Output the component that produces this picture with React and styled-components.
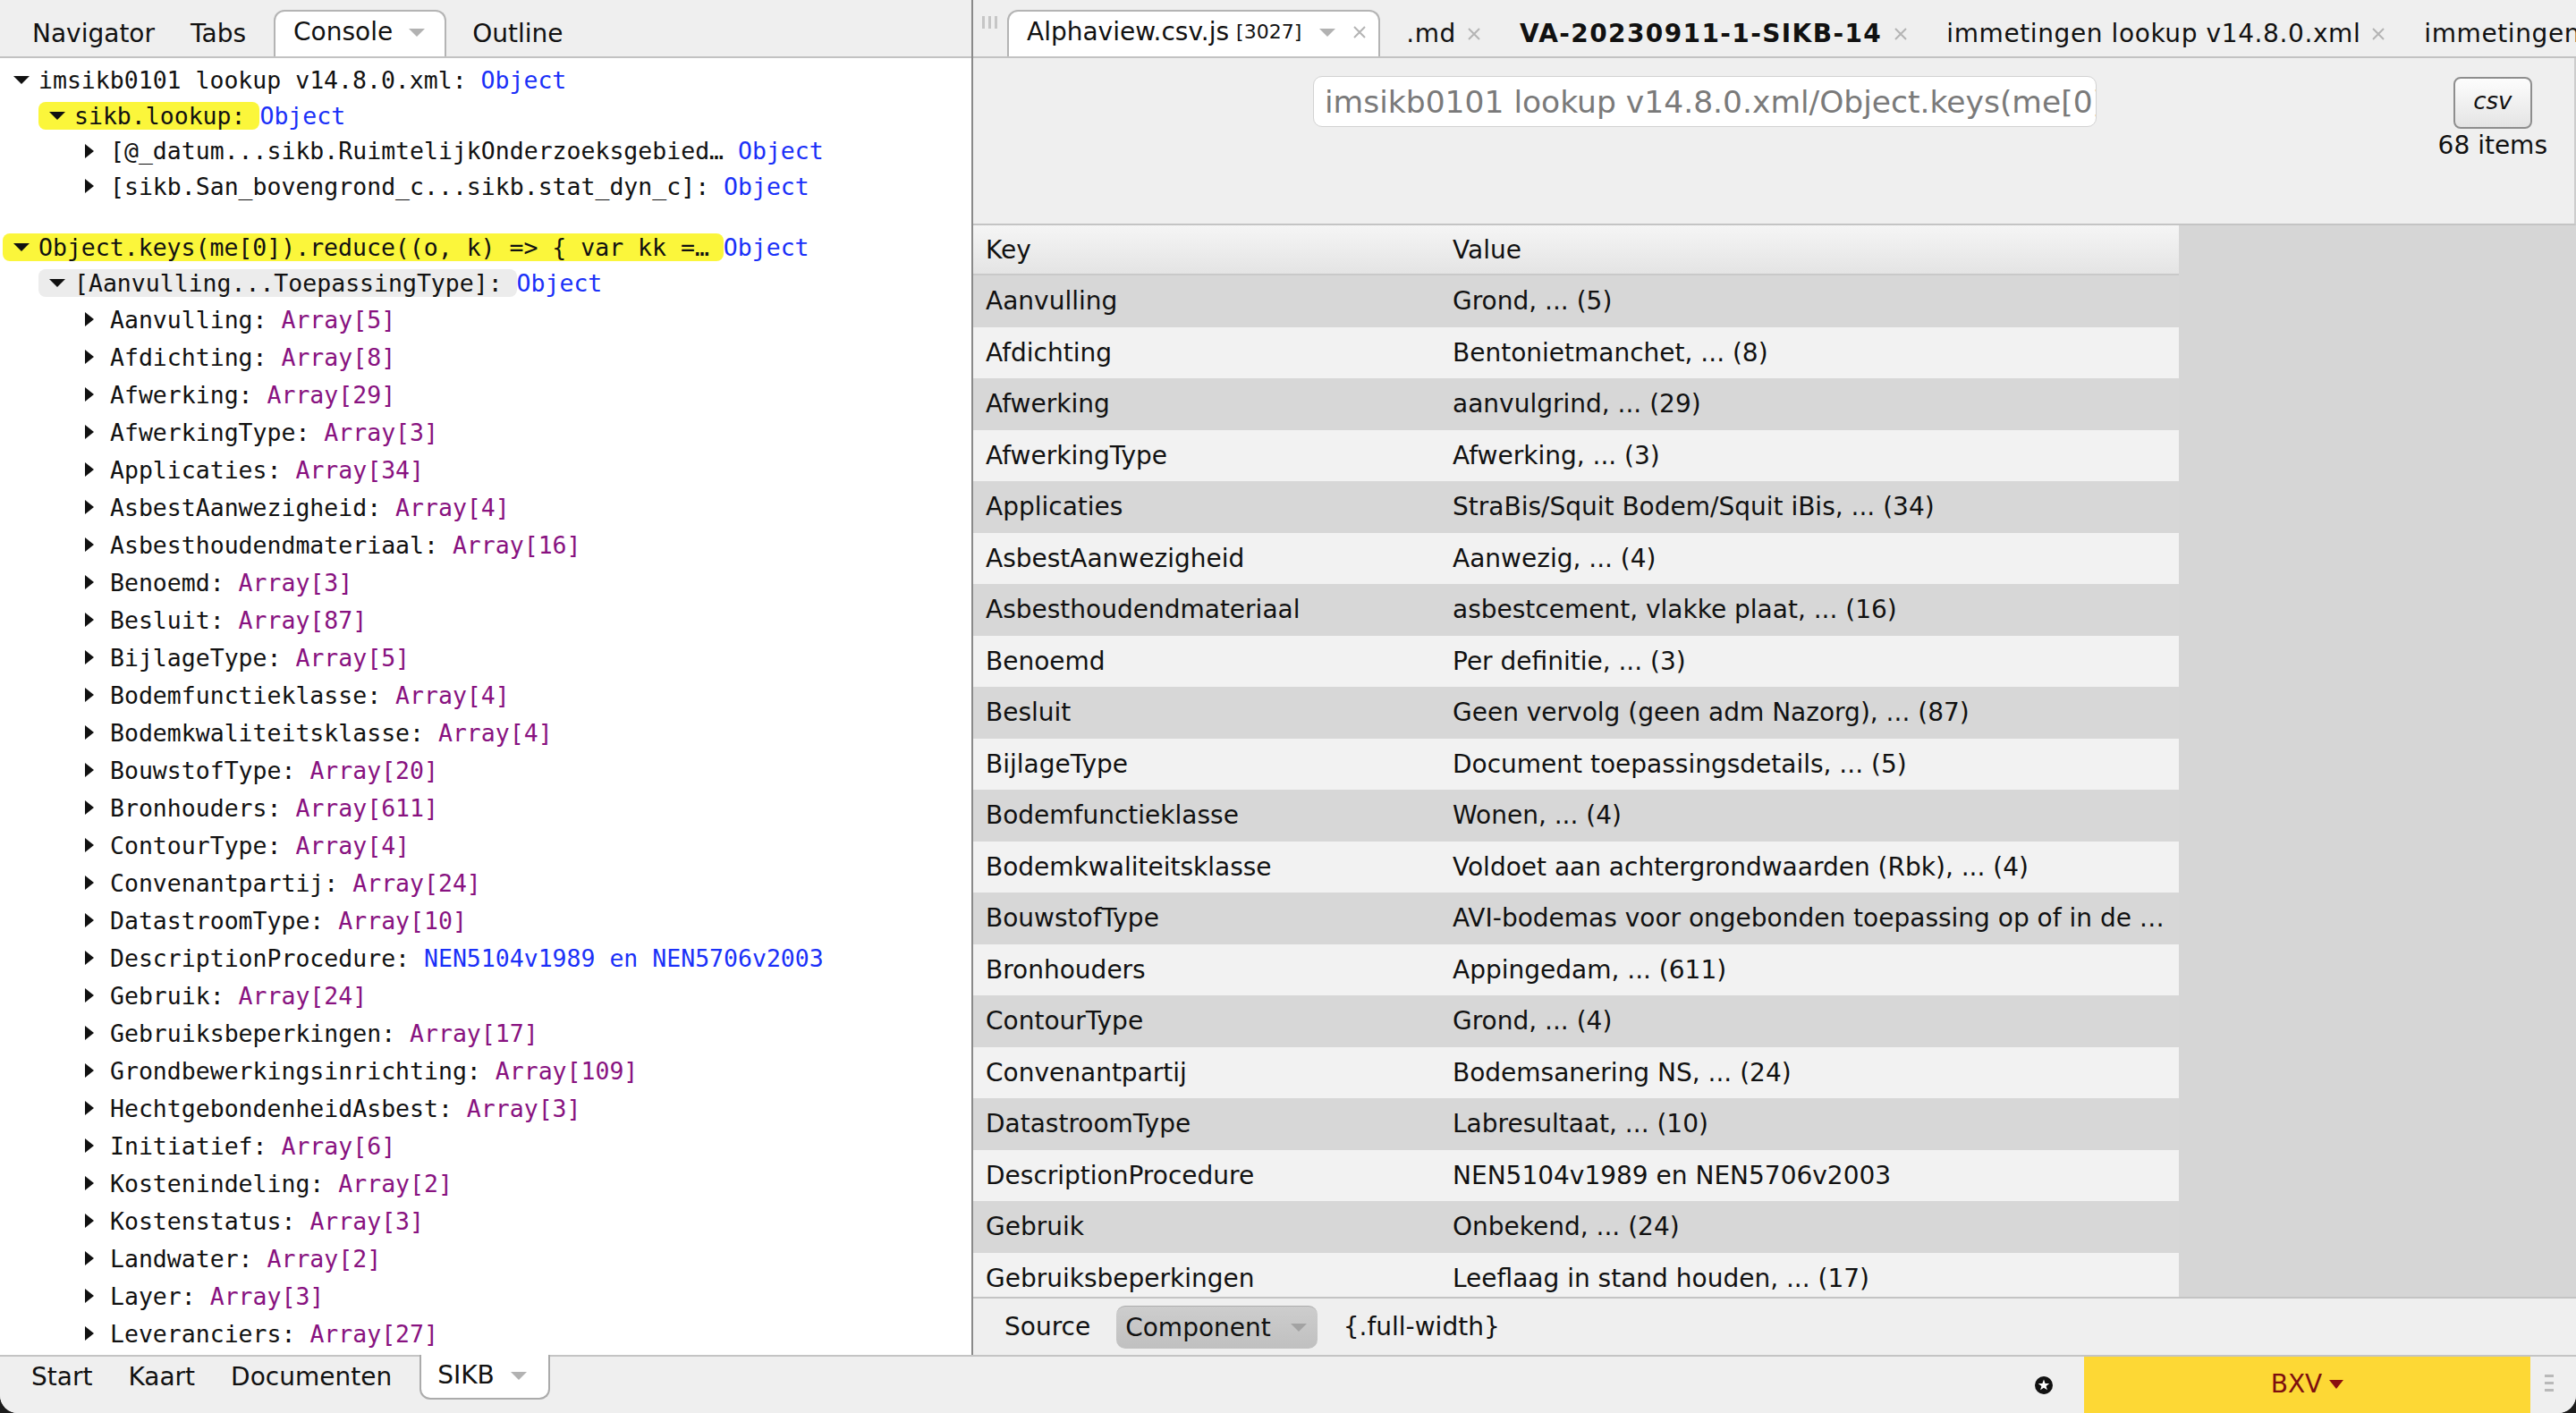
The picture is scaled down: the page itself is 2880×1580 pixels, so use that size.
import React from "react";
import styled, { createGlobalStyle, css } from "styled-components";

const UI = `"DejaVu Sans", "Lucida Grande", Verdana, sans-serif`;
const MONO = `"DejaVu Sans Mono", Menlo, monospace`;

const GlobalStyle = createGlobalStyle`
  * { box-sizing: border-box; }
  html, body { margin: 0; padding: 0; background: #1c1c1c; }
  #root { width: 2880px; height: 1580px; }
`;

const consoleTop = [
  { level: 0, open: true, text: "imsikb0101 lookup v14.8.0.xml: ", value: "Object", kind: "obj" },
  { level: 1, open: true, text: "sikb.lookup: ", value: "Object", kind: "obj", hl: "#fbf63b" },
  { level: 2, text: "[@_datum...sikb.RuimtelijkOnderzoeksgebied\u2026 ", value: "Object", kind: "obj" },
  { level: 2, text: "[sikb.San_bovengrond_c...sikb.stat_dyn_c]: ", value: "Object", kind: "obj" },
];

const leaves = [
  ["Aanvulling", "Array[5]"],
  ["Afdichting", "Array[8]"],
  ["Afwerking", "Array[29]"],
  ["AfwerkingType", "Array[3]"],
  ["Applicaties", "Array[34]"],
  ["AsbestAanwezigheid", "Array[4]"],
  ["Asbesthoudendmateriaal", "Array[16]"],
  ["Benoemd", "Array[3]"],
  ["Besluit", "Array[87]"],
  ["BijlageType", "Array[5]"],
  ["Bodemfunctieklasse", "Array[4]"],
  ["Bodemkwaliteitsklasse", "Array[4]"],
  ["BouwstofType", "Array[20]"],
  ["Bronhouders", "Array[611]"],
  ["ContourType", "Array[4]"],
  ["Convenantpartij", "Array[24]"],
  ["DatastroomType", "Array[10]"],
  ["DescriptionProcedure", "NEN5104v1989 en NEN5706v2003", "obj"],
  ["Gebruik", "Array[24]"],
  ["Gebruiksbeperkingen", "Array[17]"],
  ["Grondbewerkingsinrichting", "Array[109]"],
  ["HechtgebondenheidAsbest", "Array[3]"],
  ["Initiatief", "Array[6]"],
  ["Kostenindeling", "Array[2]"],
  ["Kostenstatus", "Array[3]"],
  ["Landwater", "Array[2]"],
  ["Layer", "Array[3]"],
  ["Leveranciers", "Array[27]"],
];

const tableRows = [
  ["Aanvulling", "Grond, ... (5)"],
  ["Afdichting", "Bentonietmanchet, ... (8)"],
  ["Afwerking", "aanvulgrind, ... (29)"],
  ["AfwerkingType", "Afwerking, ... (3)"],
  ["Applicaties", "StraBis/Squit Bodem/Squit iBis, ... (34)"],
  ["AsbestAanwezigheid", "Aanwezig, ... (4)"],
  ["Asbesthoudendmateriaal", "asbestcement, vlakke plaat, ... (16)"],
  ["Benoemd", "Per definitie, ... (3)"],
  ["Besluit", "Geen vervolg (geen adm Nazorg), ... (87)"],
  ["BijlageType", "Document toepassingsdetails, ... (5)"],
  ["Bodemfunctieklasse", "Wonen, ... (4)"],
  ["Bodemkwaliteitsklasse", "Voldoet aan achtergrondwaarden (Rbk), ... (4)"],
  ["BouwstofType", "AVI-bodemas voor ongebonden toepassing op of in de bodem, ... (20)"],
  ["Bronhouders", "Appingedam, ... (611)"],
  ["ContourType", "Grond, ... (4)"],
  ["Convenantpartij", "Bodemsanering NS, ... (24)"],
  ["DatastroomType", "Labresultaat, ... (10)"],
  ["DescriptionProcedure", "NEN5104v1989 en NEN5706v2003"],
  ["Gebruik", "Onbekend, ... (24)"],
  ["Gebruiksbeperkingen", "Leeflaag in stand houden, ... (17)"],
];

function CloseIcon() {
  return (
    <svg width="16" height="16" viewBox="0 0 16 16">
      <path d="M2 2 L14 14 M14 2 L2 14" stroke="#b4b4b4" strokeWidth="2" fill="none" />
    </svg>
  );
}

function StarBadge() {
  return (
    <svg width="20" height="20" viewBox="0 0 20 20">
      <circle cx="10" cy="10" r="10" fill="#111" />
      <path
        d="M10 3.6 L11.6 8 L16.2 8.1 L12.6 10.9 L13.9 15.3 L10 12.7 L6.1 15.3 L7.4 10.9 L3.8 8.1 L8.4 8 Z"
        fill="#fff"
      />
    </svg>
  );
}

function App() {
  return (
    <>
      <GlobalStyle />
      <Window>
        <Main>
          <LeftPane>
            <TabBar $pad={16}>
              <Tab>Navigator</Tab>
              <Tab>Tabs</Tab>
              <ActiveTab $left={11} $right={9}>
                Console
                <Caret $gap={18} />
              </ActiveTab>
              <Tab>Outline</Tab>
            </TabBar>

            <Console>
              {consoleTop.map((r, i) => (
                <TreeRow key={i} $level={r.level} $h={39.5}>
                  <Label $hl={r.hl}>
                    <Toggle $open={r.open} />
                    {r.text}
                  </Label>
                  <Val $kind={r.kind}>{r.value}</Val>
                </TreeRow>
              ))}

              <Group>
                <TreeRow $level={0} $h={40}>
                  <Label $hl="#fbf63b">
                    <Toggle $open />
                    {"Object.keys(me[0]).reduce((o, k) => { var kk =\u2026 "}
                  </Label>
                  <Val $kind="obj">Object</Val>
                </TreeRow>
                <TreeRow $level={1} $h={40}>
                  <Label $hl="#ececec">
                    <Toggle $open />
                    {"[Aanvulling...ToepassingType]: "}
                  </Label>
                  <Val $kind="obj">Object</Val>
                </TreeRow>
                {leaves.map(([k, v, kind]) => (
                  <TreeRow key={k} $level={2} $h={42}>
                    <Label>
                      <Toggle />
                      {k + ": "}
                    </Label>
                    <Val $kind={kind || "array"}>{v}</Val>
                  </TreeRow>
                ))}
              </Group>
            </Console>
          </LeftPane>

          <Divider />

          <RightPane>
            <TabBar $pad={10}>
              <Grip />
              <ActiveTab $left={11} $right={8} $padRight={13}>
                Alphaview.csv.js<Small>[3027]</Small>
                <Caret $gap={20} />
                <CloseSlot $gap={19}>
                  <CloseIcon />
                </CloseSlot>
              </ActiveTab>
              <FileTab>
                .md
                <CloseSlot $gap={12}>
                  <CloseIcon />
                </CloseSlot>
              </FileTab>
              <FileTab $bold>
                VA-20230911-1-SIKB-14
                <CloseSlot $gap={13}>
                  <CloseIcon />
                </CloseSlot>
              </FileTab>
              <FileTab>
                immetingen lookup v14.8.0.xml
                <CloseSlot $gap={12}>
                  <CloseIcon />
                </CloseSlot>
              </FileTab>
              <FileTab>
                immetingen lookup v14.8.0.xml
                <CloseSlot $gap={12}>
                  <CloseIcon />
                </CloseSlot>
              </FileTab>
            </TabBar>

            <Header>
              <SearchBox>imsikb0101 lookup v14.8.0.xml/Object.keys(me[0]).reduce((o, k) =&gt;</SearchBox>
              <ExportColumn>
                <CsvButton>csv</CsvButton>
                <ItemCount>68 items</ItemCount>
              </ExportColumn>
            </Header>

            <TableArea>
              <Table>
                <HeadRow>
                  <Cell>Key</Cell>
                  <Cell>Value</Cell>
                </HeadRow>
                {tableRows.map(([k, v], i) => (
                  <BodyRow key={k} $odd={i % 2 === 1}>
                    <Cell>{k}</Cell>
                    <Cell>{v}</Cell>
                  </BodyRow>
                ))}
              </Table>
            </TableArea>

            <Footer>
              <span>Source</span>
              <Select>
                Component
                <Caret $gap={22} $color="#a3a3a3" />
              </Select>
              <Selector>{"{.full-width}"}</Selector>
            </Footer>
          </RightPane>
        </Main>

        <BottomBar>
          <BottomTab>Start</BottomTab>
          <BottomTab>Kaart</BottomTab>
          <BottomTab>Documenten</BottomTab>
          <BottomActive>
            SIKB
            <Caret $gap={18} />
          </BottomActive>
          <StatusArea>
            <StarBadge />
            <Profile>
              BXV
              <Caret $gap={8} $color="#8a1010" $size={8} />
            </Profile>
            <Handle />
          </StatusArea>
        </BottomBar>
      </Window>
    </>
  );
}

export default App;

const Window = styled.div`
  display: flex;
  flex-direction: column;
  width: 2880px;
  height: 1580px;
  background: #efefef;
  border-radius: 0 0 20px 20px;
  overflow: hidden;
  font-family: ${UI};
  font-size: 28px;
  color: #111;
`;

const Main = styled.div`
  display: flex;
  height: 1515px;
  flex: none;
`;

const LeftPane = styled.div`
  display: flex;
  flex-direction: column;
  width: 1086px;
  flex: none;
`;

const Divider = styled.div`
  width: 2px;
  flex: none;
  background: #8a8a8a;
`;

const RightPane = styled.div`
  display: flex;
  flex-direction: column;
  flex: 1;
  min-width: 0;
`;

const TabBar = styled.div`
  display: flex;
  align-items: flex-end;
  height: 65px;
  flex: none;
  padding-left: ${(p) => p.$pad}px;
  background: #efefef;
  border-bottom: 2px solid #c2c2c2;
  white-space: nowrap;
  overflow: hidden;
  line-height: 1;
`;

const Tab = styled.div`
  display: flex;
  align-items: center;
  height: 50px;
  padding: 0 20px;
  flex: none;
`;

const ActiveTab = styled.div`
  display: flex;
  align-items: center;
  height: 54px;
  margin: 0 ${(p) => p.$right}px -2px ${(p) => p.$left}px;
  padding: 0 ${(p) => p.$padRight || 22}px 6px 20px;
  flex: none;
  background: #fff;
  border: 2px solid #b4b4b4;
  border-bottom: none;
  border-radius: 12px 12px 0 0;
`;

const FileTab = styled.div`
  display: flex;
  align-items: center;
  height: 50px;
  padding: 0 22px 0 21px;
  flex: none;
  font-weight: ${(p) => (p.$bold ? 700 : 400)};
  letter-spacing: ${(p) => (p.$bold ? "1.4px" : "0.6px")};
`;

const Small = styled.span`
  font-size: 22px;
  margin-left: 8px;
`;

const Caret = styled.span`
  display: inline-block;
  flex: none;
  margin-left: ${(p) => p.$gap}px;
  border-left: ${(p) => p.$size || 9}px solid transparent;
  border-right: ${(p) => p.$size || 9}px solid transparent;
  border-top: ${(p) => (p.$size ? p.$size + 2 : 9)}px solid ${(p) => p.$color || "#b2b2b2"};
`;

const CloseSlot = styled.span`
  display: inline-flex;
  margin-left: ${(p) => p.$gap}px;
`;

const Grip = styled.div`
  align-self: flex-start;
  margin-top: 18px;
  width: 17px;
  height: 14px;
  flex: none;
  background: repeating-linear-gradient(to right, #c6c6c6 0 3px, transparent 3px 7px);
`;

const Console = styled.div`
  flex: 1;
  background: #fff;
  padding-top: 5px;
  overflow: hidden;
  font-family: ${MONO};
  font-size: 26.5px;
  color: #111;
`;

const Group = styled.div`
  margin-top: 28px;
`;

const TreeRow = styled.div`
  display: flex;
  align-items: center;
  height: ${(p) => p.$h}px;
  padding-left: ${(p) => 3 + p.$level * 40}px;
  white-space: pre;
`;

const Label = styled.span`
  display: inline-flex;
  align-items: center;
  height: 31px;
  padding-left: 12px;
  border-radius: 8px;
  background: ${(p) => p.$hl || "transparent"};
`;

const Toggle = styled.span`
  display: flex;
  align-items: center;
  width: 28px;
  flex: none;

  &::before {
    content: "";
    display: block;
    ${(p) =>
      p.$open
        ? css`
            border-left: 9px solid transparent;
            border-right: 9px solid transparent;
            border-top: 9px solid #111;
          `
        : css`
            border-top: 8.5px solid transparent;
            border-bottom: 8.5px solid transparent;
            border-left: 10px solid #111;
          `}
  }
`;

const Val = styled.span`
  color: ${(p) => (p.$kind === "array" ? "#881280" : "#1a30f8")};
`;

const Header = styled.div`
  display: flex;
  align-items: flex-start;
  height: 187px;
  flex: none;
  padding: 20px 30px 0 380px;
  background: #efefef;
  border-bottom: 2px solid #c4c4c4;
  border-right: 2px solid #cdcdcd;
`;

const SearchBox = styled.div`
  display: flex;
  align-items: center;
  width: 876px;
  height: 57px;
  padding: 0 12px;
  background: #fff;
  border: 1px solid #d2d2d2;
  border-radius: 10px;
  font-size: 34.5px;
  color: #7a7a7a;
  white-space: nowrap;
  overflow: hidden;
`;

const ExportColumn = styled.div`
  display: flex;
  flex-direction: column;
  align-items: center;
  margin-left: auto;
`;

const CsvButton = styled.div`
  display: flex;
  align-items: center;
  justify-content: center;
  width: 88px;
  height: 58px;
  margin-top: 1px;
  border: 2px solid #8e8e8e;
  border-radius: 8px;
  background: linear-gradient(#fdfdfd, #e4e4e4);
  font-style: italic;
  font-size: 26px;
  padding-bottom: 4px;
`;

const ItemCount = styled.div`
  margin-top: 4px;
  line-height: 30px;
`;

const TableArea = styled.div`
  flex: 1;
  min-height: 0;
  background: #d6d6d6;
  overflow: hidden;
`;

const Table = styled.div`
  width: 1348px;
`;

const rowGrid = css`
  display: grid;
  grid-template-columns: 522px 826px;
  align-items: center;
`;

const HeadRow = styled.div`
  ${rowGrid}
  height: 56px;
  background: linear-gradient(#f5f5f5, #e4e4e4);
  border-bottom: 2px solid #c9c9c9;
`;

const BodyRow = styled.div`
  ${rowGrid}
  height: 57.5px;
  background: ${(p) => (p.$odd ? "#f2f2f2" : "#d7d7d7")};
`;

const Cell = styled.div`
  padding-left: 14px;
  white-space: nowrap;
  overflow: hidden;
  text-overflow: ellipsis;
`;

const Footer = styled.div`
  display: flex;
  align-items: center;
  height: 65px;
  flex: none;
  padding-left: 35px;
  background: #efefef;
  border-top: 2px solid #c4c4c4;
`;

const Select = styled.div`
  display: flex;
  align-items: center;
  height: 48px;
  margin-left: 29px;
  padding: 0 12px 0 10px;
  border-radius: 10px;
  border-top: 1px solid #adadad;
  background: linear-gradient(#cdcdcd, #c0c0c0);
`;

const Selector = styled.span`
  margin-left: 29px;
`;

const BottomBar = styled.div`
  display: flex;
  align-items: flex-start;
  height: 65px;
  flex: none;
  padding-left: 15px;
  background: #efefef;
  border-top: 2px solid #c4c4c4;
  line-height: 1;
`;

const BottomTab = styled.div`
  display: flex;
  align-items: center;
  height: 46px;
  padding: 0 20px;
`;

const BottomActive = styled.div`
  display: flex;
  align-items: center;
  height: 50px;
  margin: -2px 0 0 11px;
  padding: 0 24px 2px 18px;
  background: #fff;
  border: 2px solid #ababab;
  border-top: none;
  border-radius: 0 0 12px 12px;
`;

const StatusArea = styled.div`
  display: flex;
  align-items: center;
  align-self: stretch;
  margin-left: auto;
`;

const Profile = styled.div`
  display: flex;
  align-items: center;
  justify-content: center;
  align-self: stretch;
  width: 499px;
  margin-left: 35px;
  background: #fdd835;
  color: #7d0f0f;
  padding-bottom: 2px;
`;

const Handle = styled.div`
  width: 10px;
  height: 20px;
  margin: 0 25px 4px 16px;
  background: repeating-linear-gradient(to bottom, #b9b9b9 0 3px, transparent 3px 8px);
`;
